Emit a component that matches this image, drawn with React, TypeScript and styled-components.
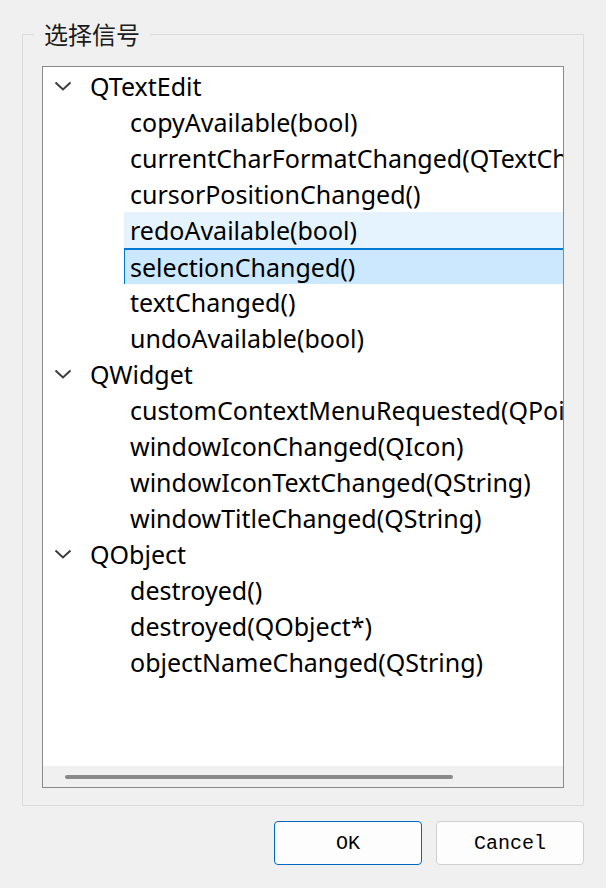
import React from 'react';
import styled, { createGlobalStyle } from 'styled-components';

const GlobalStyle = createGlobalStyle`
  html, body {
    margin: 0;
    padding: 0;
    background: #f0f0f0;
  }
  body {
    font-family: "Noto Sans", "Noto Sans CJK SC", sans-serif;
  }
`;

const Dialog = styled.div`
  width: 606px;
  height: 888px;
  box-sizing: border-box;
  padding: 19px 22px 0 22px;
  display: flex;
  flex-direction: column;
  background: #f0f0f0;
`;

const GroupBox = styled.fieldset`
  margin: 0;
  padding: 17px 19px 17px 19px;
  border: 1px solid #dcdcdc;
  min-width: 0;
`;

const GroupTitle = styled.legend`
  margin-left: -8px;
  padding: 0 10px;
  height: 30px;
  line-height: 30px;
  font-family: "Noto Sans CJK SC", sans-serif;
  font-size: 24px;
  color: #1a1a1a;
`;

const TreeFrame = styled.div`
  height: 722px;
  box-sizing: border-box;
  border: 1px solid #8a8a8a;
  background: #fff;
  display: flex;
  flex-direction: column;
`;

const TreeBody = styled.div`
  flex: 1;
  overflow: hidden;
  padding-top: 1px;
`;

const HScroll = styled.div`
  height: 21px;
  background: #f0f0f0;
  display: flex;
  align-items: center;
  padding-left: 22px;
`;

const HThumb = styled.div`
  width: 388px;
  height: 4px;
  border-radius: 2px;
  background: #8a8a8a;
  margin-top: 1px;
`;

const Row = styled.div<{ $indent: number; $state?: 'hover' | 'current' }>`
  height: 36px;
  box-sizing: border-box;
  margin-left: ${(p) => p.$indent}px;
  display: flex;
  align-items: center;
  white-space: nowrap;
  font-size: 25px;
  color: #000;
  padding-left: ${(p) => (p.$state === 'current' ? 5 : 6)}px;
  background: ${(p) =>
    p.$state === 'hover' ? '#e5f3fe' : p.$state === 'current' ? '#cce8ff' : 'transparent'};
  ${(p) =>
    p.$state === 'current' &&
    `border-top: 2px solid #0078d4; border-left: 1px solid #0078d4; padding-top: 0;`}
`;

const HeaderRow = styled.div`
  height: 36px;
  display: flex;
  align-items: center;
  white-space: nowrap;
  font-size: 25px;
  color: #000;
  padding-left: 11px;
`;

const Chevron = styled.svg`
  width: 18px;
  height: 10px;
  margin-right: 18px;
  flex-shrink: 0;
`;

const ButtonRow = styled.div`
  display: flex;
  justify-content: flex-end;
  gap: 14px;
  margin-top: 15px;
`;

const Button = styled.button<{ $default?: boolean }>`
  width: 148px;
  height: 44px;
  box-sizing: border-box;
  border-radius: 4px;
  border: 1px solid ${(p) => (p.$default ? '#0067c0' : '#d0d0d0')};
  background: #fdfdfd;
  font-family: "Liberation Mono", monospace;
  font-size: 20px;
  color: #000;
  padding: 0;
`;

type Group = {
  name: string;
  signals: string[];
};

const groups: Group[] = [
  {
    name: 'QTextEdit',
    signals: [
      'copyAvailable(bool)',
      'currentCharFormatChanged(QTextCharFormat)',
      'cursorPositionChanged()',
      'redoAvailable(bool)',
      'selectionChanged()',
      'textChanged()',
      'undoAvailable(bool)',
    ],
  },
  {
    name: 'QWidget',
    signals: [
      'customContextMenuRequested(QPoint)',
      'windowIconChanged(QIcon)',
      'windowIconTextChanged(QString)',
      'windowTitleChanged(QString)',
    ],
  },
  {
    name: 'QObject',
    signals: ['destroyed()', 'destroyed(QObject*)', 'objectNameChanged(QString)'],
  },
];

const hovered = 'redoAvailable(bool)';
const current = 'selectionChanged()';

const ChevronIcon = () => (
  <Chevron viewBox="0 0 18 10">
    <path d="M1.5 1.5 L9 8.5 L16.5 1.5" fill="none" stroke="#3c3c3c" strokeWidth="2" />
  </Chevron>
);

export default function App() {
  return (
    <>
      <GlobalStyle />
      <Dialog>
        <GroupBox>
          <GroupTitle>选择信号</GroupTitle>
          <TreeFrame>
            <TreeBody>
              {groups.map((g) => (
                <div key={g.name}>
                  <HeaderRow>
                    <ChevronIcon />
                    {g.name}
                  </HeaderRow>
                  {g.signals.map((s) => (
                    <Row
                      key={s}
                      $indent={81}
                      $state={s === hovered ? 'hover' : s === current ? 'current' : undefined}
                    >
                      {s}
                    </Row>
                  ))}
                </div>
              ))}
            </TreeBody>
            <HScroll>
              <HThumb />
            </HScroll>
          </TreeFrame>
        </GroupBox>
        <ButtonRow>
          <Button $default>OK</Button>
          <Button>Cancel</Button>
        </ButtonRow>
      </Dialog>
    </>
  );
}
